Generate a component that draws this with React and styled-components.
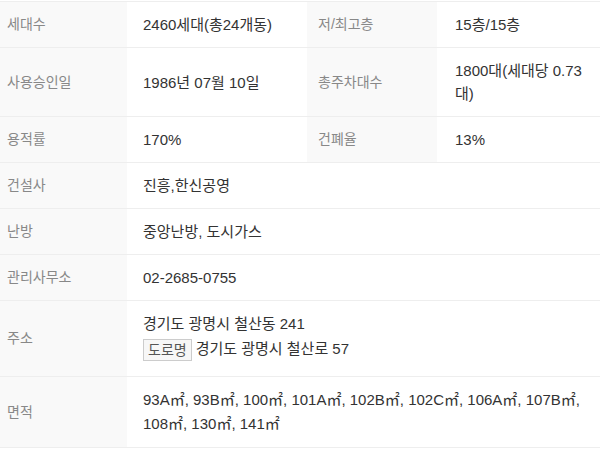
import styled, { createGlobalStyle } from "styled-components";

const GlobalStyle = createGlobalStyle`
  html, body {
    margin: 0;
    padding: 0;
    background: #fff;
  }
  body {
    font-family: "Liberation Sans", "Noto Sans CJK KR", sans-serif;
    color: #333;
  }
`;

const Table = styled.div`
  margin-top: 1px;
  border-top: 1px solid #eee;
  width: 600px;
`;

const Row = styled.div`
  display: grid;
  grid-template-columns: 127px 180px 130px 1fr;
  border-bottom: 1px solid #eee;
`;

const Label = styled.div`
  display: flex;
  align-items: center;
  background: #f9f9f9;
  color: #888;
  font-size: 14px;
  line-height: 23px;
  padding: 11px 0 11px ${(p) => p.$pad || 7}px;
`;

const Value = styled.div`
  display: flex;
  flex-direction: column;
  justify-content: center;
  font-size: 15px;
  line-height: ${(p) => p.$lh || 23}px;
  padding: 11px 8px 11px ${(p) => p.$pad || 16}px;
  grid-column: ${(p) => (p.$wide ? "2 / 5" : "auto")};
`;

const AddrValue = styled(Value)`
  justify-content: flex-start;
  padding-bottom: 14px;
`;

const AddrLine = styled.div`
  line-height: ${(p) => p.$lh || 23}px;
  height: ${(p) => p.$lh || 23}px;
  & + & {
    margin-top: 1px;
  }
`;

const RoadBadge = styled.span`
  display: inline-block;
  border: 1px solid #ccc;
  background: #f7f7f7;
  color: #555;
  font-size: 14px;
  line-height: 20px;
  padding: 0 4px;
  margin-right: 4px;
  vertical-align: middle;
`;

const pairs = [
  [
    ["세대수", "2460세대(총24개동)"],
    ["저/최고층", "15층/15층"],
  ],
  [
    ["사용승인일", "1986년 07월 10일"],
    ["총주차대수", "1800대(세대당 0.73 대)"],
  ],
  [
    ["용적률", "170%"],
    ["건폐율", "13%"],
  ],
];

const singles = [
  ["건설사", "진흥,한신공영"],
  ["난방", "중앙난방, 도시가스"],
  ["관리사무소", "02-2685-0755"],
];

export default function App() {
  return (
    <>
      <GlobalStyle />
      <Table>
        {pairs.map(([a, b]) => (
          <Row key={a[0]}>
            <Label>{a[0]}</Label>
            <Value>{a[1]}</Value>
            <Label $pad={11}>{b[0]}</Label>
            <Value $pad={18}>{b[1]}</Value>
          </Row>
        ))}
        {singles.map(([k, v]) => (
          <Row key={k}>
            <Label>{k}</Label>
            <Value $wide>{v}</Value>
          </Row>
        ))}
        <Row>
          <Label>주소</Label>
          <AddrValue $wide>
            <AddrLine>경기도 광명시 철산동 241</AddrLine>
            <AddrLine $lh={26}>
              <RoadBadge>도로명</RoadBadge>경기도 광명시 철산로 57
            </AddrLine>
          </AddrValue>
        </Row>
        <Row>
          <Label>면적</Label>
          <Value $wide $lh={24}>
            <div>
              93A㎡, 93B㎡, 100㎡, 101A㎡, 102B㎡, 102C㎡, 106A㎡, 107B㎡,
              108㎡, 130㎡, 141㎡
            </div>
          </Value>
        </Row>
      </Table>
    </>
  );
}
